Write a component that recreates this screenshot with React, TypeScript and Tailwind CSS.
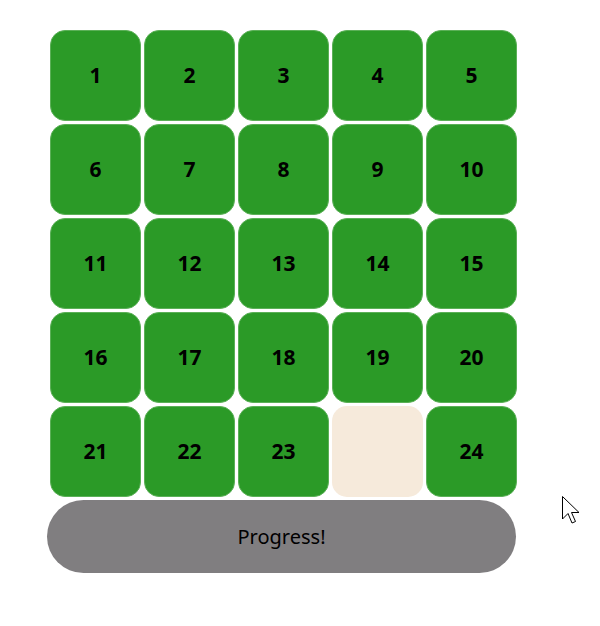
import React from 'react';

const tiles: (number | null)[] = [
  1, 2, 3, 4, 5,
  6, 7, 8, 9, 10,
  11, 12, 13, 14, 15,
  16, 17, 18, 19, 20,
  21, 22, 23, null, 24,
];

export default function App() {
  return (
    <div className="relative w-[600px] h-[626px] bg-white" style={{ fontFamily: '"Noto Sans", "Open Sans", sans-serif' }}>
      <div className="pt-[30px] pl-[50px]">
        <div className="grid grid-cols-[repeat(5,91px)] auto-rows-[91px] gap-[3px]">
          {tiles.map((n, i) =>
            n === null ? (
              <div key={i} className="rounded-[15px] bg-[#f6eadb]" />
            ) : (
              <div key={i} className="rounded-[15px] bg-[#2b9a27] border border-[#5bb057] flex items-center justify-center text-[21px] font-bold text-black">
                {n}
              </div>
            )
          )}
        </div>
      </div>
      <div className="pl-[47px] mt-[3px]">
        <button className="w-[469px] h-[73px] rounded-full bg-[#807e80] text-[20px] text-black flex items-center justify-center">
          Progress!
        </button>
      </div>
      <svg className="absolute left-[561px] top-[495px]" width="22" height="32" viewBox="0 0 22 32">
        <path d="M1.5 1.5 L1.5 24 L7 18.5 L11 28 L14.5 26.5 L10.5 17.5 L18 17.5 Z" fill="white" stroke="black" strokeWidth="1" strokeLinejoin="miter" />
      </svg>
    </div>
  );
}
